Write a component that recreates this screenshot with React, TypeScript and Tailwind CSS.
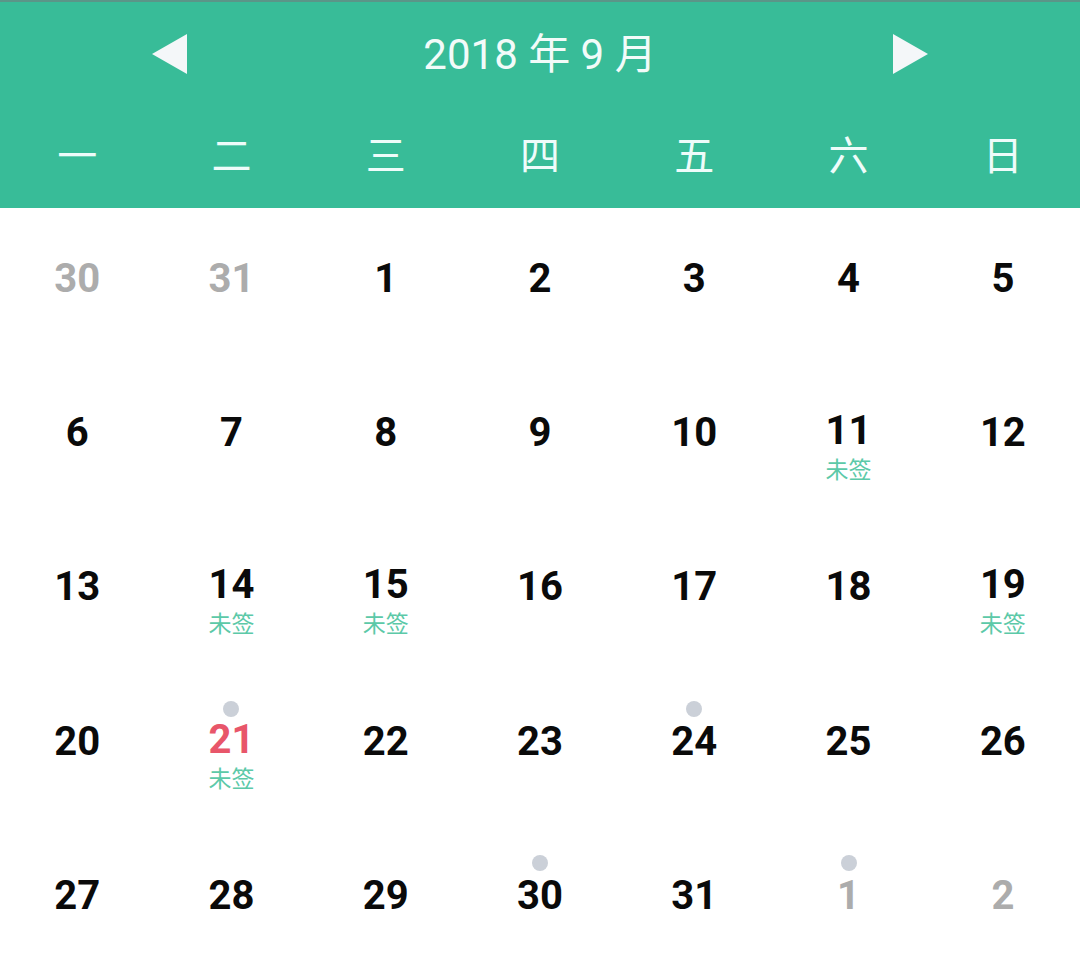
type Day = { n: number; muted?: boolean; sub?: boolean; dot?: boolean; today?: boolean };

const rows: Day[][] = [
  [{ n: 30, muted: true }, { n: 31, muted: true }, { n: 1 }, { n: 2 }, { n: 3 }, { n: 4 }, { n: 5 }],
  [{ n: 6 }, { n: 7 }, { n: 8 }, { n: 9 }, { n: 10 }, { n: 11, sub: true }, { n: 12 }],
  [{ n: 13 }, { n: 14, sub: true }, { n: 15, sub: true }, { n: 16 }, { n: 17 }, { n: 18 }, { n: 19, sub: true }],
  [{ n: 20 }, { n: 21, today: true, dot: true, sub: true }, { n: 22 }, { n: 23 }, { n: 24, dot: true }, { n: 25 }, { n: 26 }],
  [{ n: 27 }, { n: 28 }, { n: 29 }, { n: 30, dot: true }, { n: 31 }, { n: 1, muted: true, dot: true }, { n: 2, muted: true }],
];

const weekdays = ["一", "二", "三", "四", "五", "六", "日"];

function Cell({ d }: { d: Day }) {
  const color = d.today ? "text-[#e8566a]" : d.muted ? "text-[#acacac]" : "text-[#0a0a0a]";
  return (
    <div className="relative flex flex-col items-center">
      {d.dot && (
        <div className="absolute top-[30px] left-1/2 -translate-x-1/2 w-4 h-4 rounded-full bg-[#cbd0d8]" />
      )}
      <div
        className={`${d.sub ? "pt-[45px]" : "pt-[47px]"} text-[40px] leading-[48px] font-bold ${color}`}
        style={{ fontFamily: "Roboto, 'Liberation Sans', sans-serif" }}
      >
        {d.n}
      </div>
      {d.sub && (
        <div
          className="text-[23px] leading-[26px] text-[#5cc9a8]"
          style={{ fontFamily: "'Noto Sans CJK SC', 'Noto Sans', sans-serif" }}
        >
          未签
        </div>
      )}
    </div>
  );
}

export default function App() {
  return (
    <div className="w-[1080px] h-[979px] bg-white flex flex-col overflow-hidden">
      <div className="h-[208px] bg-[#38bc98] flex flex-col">
        <div className="h-[2px] bg-[#5b9588]" />
        <div className="h-[104px] flex items-center justify-between px-[152px]">
          <svg width="35" height="40" viewBox="0 0 35 40">
            <polygon points="35,0 35,40 0,20" fill="#f4f7f9" />
          </svg>
          <span
            className="text-[42px] text-[#f2fbf9] font-normal"
            style={{ fontFamily: "Roboto, 'Noto Sans CJK SC', sans-serif" }}
          >
            2018 年 9 月
          </span>
          <svg width="35" height="40" viewBox="0 0 35 40">
            <polygon points="0,0 0,40 35,20" fill="#f4f7f9" />
          </svg>
        </div>
        <div className="flex-1 grid grid-cols-7 items-center pb-[8px]">
          {weekdays.map((w) => (
            <div
              key={w}
              className="text-center text-[40px] text-[#eefcfa] font-normal"
              style={{ fontFamily: "'Noto Sans CJK SC', sans-serif" }}
            >
              {w}
            </div>
          ))}
        </div>
      </div>
      <div className="flex-1 grid grid-rows-5">
        {rows.map((r, i) => (
          <div key={i} className="grid grid-cols-7">
            {r.map((d, j) => (
              <Cell key={j} d={d} />
            ))}
          </div>
        ))}
      </div>
    </div>
  );
}
